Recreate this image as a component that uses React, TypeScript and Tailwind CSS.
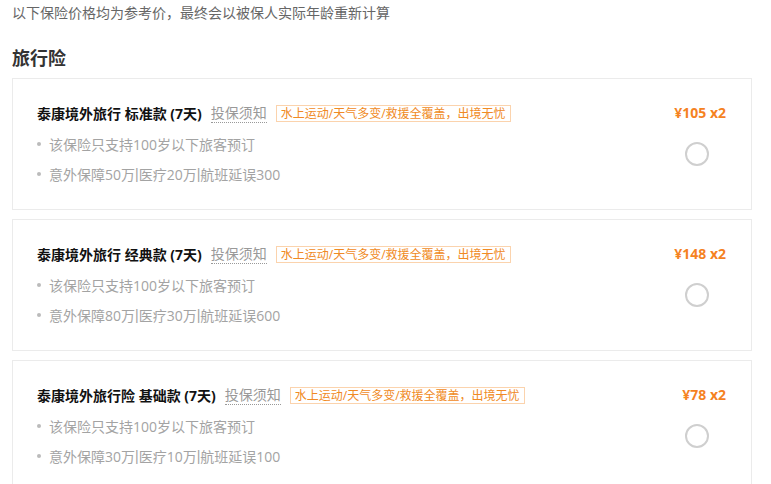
import React from 'react';

const plans = [
  { name: '泰康境外旅行 标准款 (7天)', cover: '意外保障50万|医疗20万|航班延误300', price: '¥105 x2' },
  { name: '泰康境外旅行 经典款 (7天)', cover: '意外保障80万|医疗30万|航班延误600', price: '¥148 x2' },
  { name: '泰康境外旅行险 基础款 (7天)', cover: '意外保障30万|医疗10万|航班延误100', price: '¥78 x2' },
];

// the pipe in Open Sans is too wide, so it gets a narrow face
function Cover({ text }: { text: string }) {
  const parts = text.split('|');
  return (
    <>
      {parts.map((p, i) => (
        <React.Fragment key={p}>
          {i > 0 && <span style={{ fontFamily: '"Liberation Sans", sans-serif' }}>|</span>}
          {p}
        </React.Fragment>
      ))}
    </>
  );
}

function PlanCard({ plan }: { plan: (typeof plans)[number] }) {
  return (
    <div className="flex h-[132px] border border-[#ebebeb] bg-white pl-6 pr-[25px] pt-6">
      <div className="flex-1">
        <div className="flex h-5 items-center">
          <span className="text-[14px] font-bold text-[#111]">{plan.name}</span>
          <span className="ml-[9px] border-b border-dotted border-[#999] text-[14px] leading-[18px] text-[#999]">投保须知</span>
          <span className="ml-[9px] border border-[#fbd3ad] px-1 text-[12px] leading-[15px] text-[#f08a24]">
            水上运动/天气多变/救援全覆盖，出境无忧
          </span>
        </div>
        <ul className="mt-[6px] text-[14px] text-[#a3a3a3]">
          <li className="flex h-[30px] items-center">
            <span className="mr-2 h-1 w-1 rounded-full bg-[#bbb]" />
            该保险只支持100岁以下旅客预订
          </li>
          <li className="flex h-[30px] items-center">
            <span className="mr-2 h-1 w-1 rounded-full bg-[#bbb]" />
            <Cover text={plan.cover} />
          </li>
        </ul>
      </div>
      <div className="flex flex-col items-end">
        <div className="flex h-5 -translate-y-px items-center text-[14px] font-bold text-[#f5821f]">{plan.price}</div>
        <div className="mr-[17px] mt-[19px] h-6 w-6 rounded-full border-2 border-[#cfcfcf]" />
      </div>
    </div>
  );
}

export default function App() {
  return (
    <div className="h-[484px] overflow-hidden bg-white px-3" style={{ fontFamily: '"Open Sans", "Noto Sans CJK SC", sans-serif' }}>
      <p className="h-[26px] text-[14px] leading-[26px] text-[#666]">以下保险价格均为参考价，最终会以被保人实际年龄重新计算</p>
      <h2 className="mt-[20px] h-6 text-[18px] font-bold leading-6 text-[#333]">旅行险</h2>
      <div className="mt-2 flex w-[740px] flex-col gap-[9px]">
        {plans.map(p => (
          <PlanCard key={p.name} plan={p} />
        ))}
      </div>
    </div>
  );
}
